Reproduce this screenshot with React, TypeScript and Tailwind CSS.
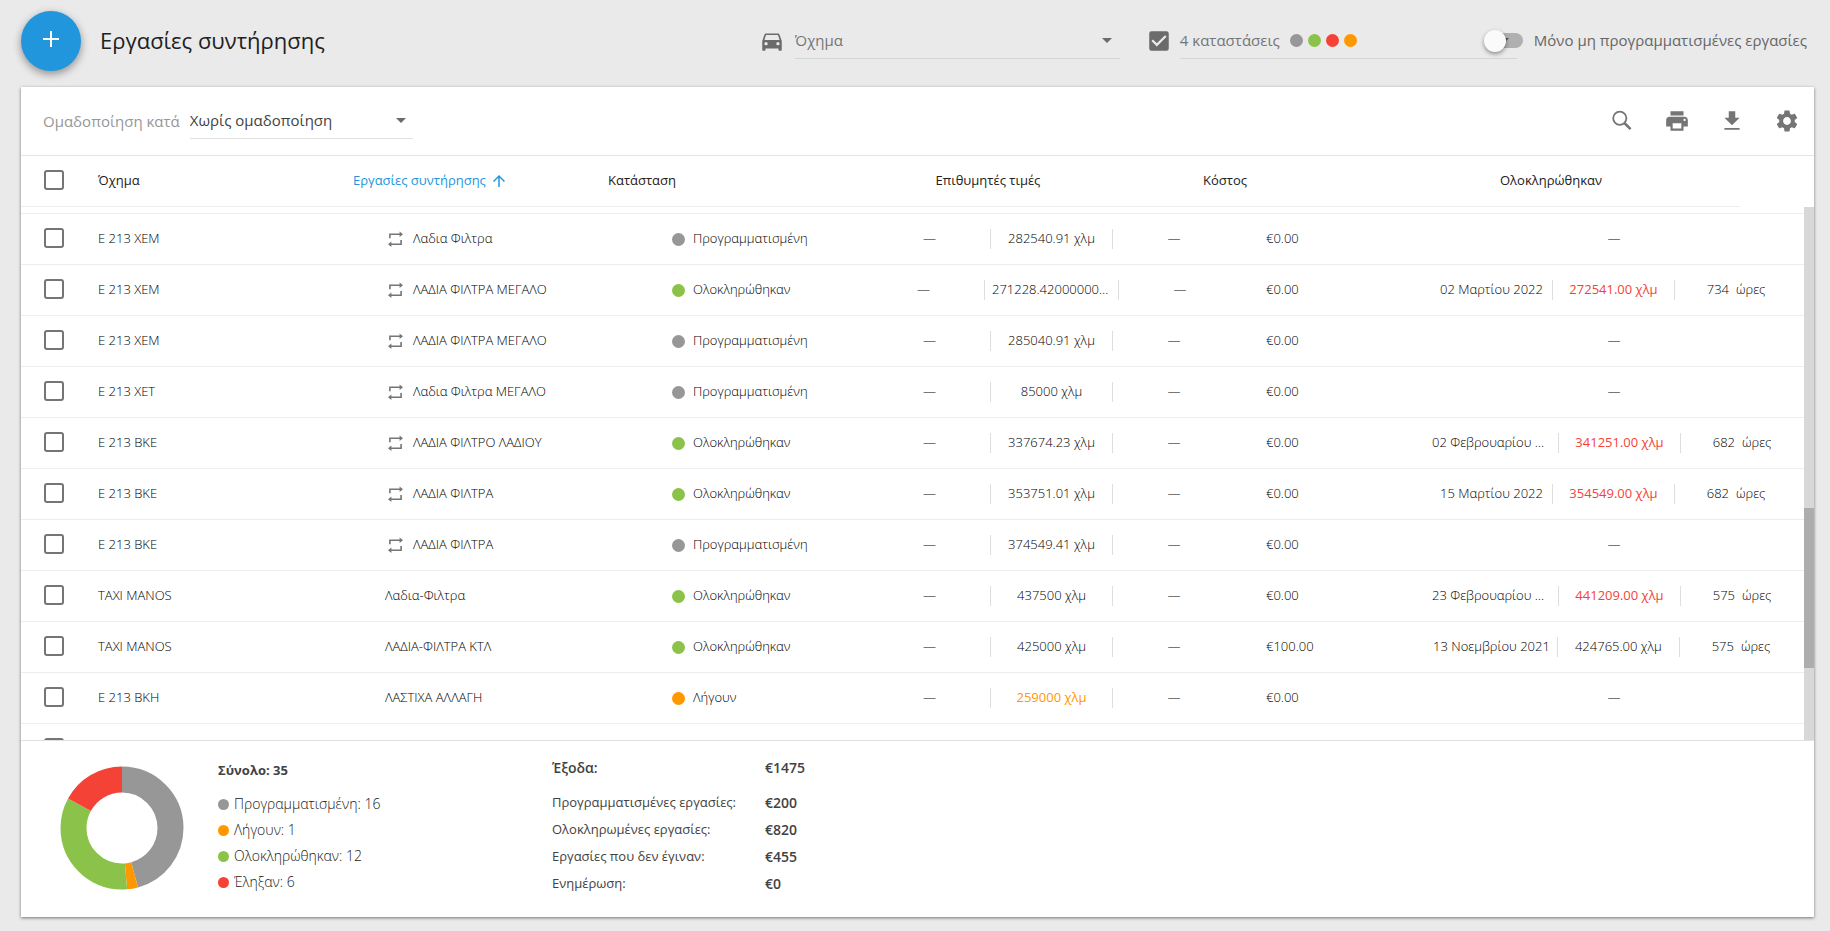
import React from "react";
import { MdArrowUpward, MdCheckBox, MdDirectionsCar, MdPrint, MdSettings } from "react-icons/md";

type Status = "planned" | "done" | "expiring" | "expired";

type Task = {
  vehicle: string;
  name: string;
  repeat: boolean;
  status: Status;
  mileage: string;
  cost: string;
  completed?: { date: string; mileage: string; hours: string; late: boolean };
};

const STATUS: Record<Status, { label: string; dot: string; color: string }> = {
  planned: { label: "Προγραμματισμένη", dot: "bg-[#979797]", color: "#979797" },
  expiring: { label: "Λήγουν", dot: "bg-[#ff9800]", color: "#ff9800" },
  done: { label: "Ολοκληρώθηκαν", dot: "bg-[#8bc34a]", color: "#8bc34a" },
  expired: { label: "Έληξαν", dot: "bg-[#f44336]", color: "#f44336" },
};

const TASKS: Task[] = [
  { vehicle: "Ε 213 ΧΕΜ", name: "Λαδια Φιλτρα", repeat: true, status: "planned", mileage: "282540.91 χλμ", cost: "€0.00" },
  { vehicle: "Ε 213 ΧΕΜ", name: "ΛΑΔΙΑ ΦΙΛΤΡΑ ΜΕΓΑΛΟ", repeat: true, status: "done", mileage: "271228.42000000004 χλμ", cost: "€0.00", completed: { date: "02 Μαρτίου 2022", mileage: "272541.00 χλμ", hours: "734", late: true } },
  { vehicle: "Ε 213 ΧΕΜ", name: "ΛΑΔΙΑ ΦΙΛΤΡΑ ΜΕΓΑΛΟ", repeat: true, status: "planned", mileage: "285040.91 χλμ", cost: "€0.00" },
  { vehicle: "Ε 213 ΧΕΤ", name: "Λαδια Φιλτρα ΜΕΓΑΛΟ", repeat: true, status: "planned", mileage: "85000 χλμ", cost: "€0.00" },
  { vehicle: "Ε 213 ΒΚΕ", name: "ΛΑΔΙΑ ΦΙΛΤΡΟ ΛΑΔΙΟΥ", repeat: true, status: "done", mileage: "337674.23 χλμ", cost: "€0.00", completed: { date: "02 Φεβρουαρίου 2022", mileage: "341251.00 χλμ", hours: "682", late: true } },
  { vehicle: "Ε 213 ΒΚΕ", name: "ΛΑΔΙΑ ΦΙΛΤΡΑ", repeat: true, status: "done", mileage: "353751.01 χλμ", cost: "€0.00", completed: { date: "15 Μαρτίου 2022", mileage: "354549.00 χλμ", hours: "682", late: true } },
  { vehicle: "Ε 213 ΒΚΕ", name: "ΛΑΔΙΑ ΦΙΛΤΡΑ", repeat: true, status: "planned", mileage: "374549.41 χλμ", cost: "€0.00" },
  { vehicle: "TAXI MANOS", name: "Λαδια-Φιλτρα", repeat: false, status: "done", mileage: "437500 χλμ", cost: "€0.00", completed: { date: "23 Φεβρουαρίου 2022", mileage: "441209.00 χλμ", hours: "575", late: true } },
  { vehicle: "TAXI MANOS", name: "ΛΑΔΙΑ-ΦΙΛΤΡΑ ΚΤΛ", repeat: false, status: "done", mileage: "425000 χλμ", cost: "€100.00", completed: { date: "13 Νοεμβρίου 2021", mileage: "424765.00 χλμ", hours: "575", late: false } },
  { vehicle: "Ε 213 ΒΚΗ", name: "ΛΑΣΤΙΧΑ ΑΛΛΑΓΗ", repeat: false, status: "expiring", mileage: "259000 χλμ", cost: "€0.00" },
  { vehicle: "", name: "", repeat: false, status: "planned", mileage: "", cost: "" },
];

const SUMMARY: { status: Status; count: number }[] = [
  { status: "planned", count: 16 },
  { status: "expiring", count: 1 },
  { status: "done", count: 12 },
  { status: "expired", count: 6 },
];

const EXPENSES = [
  { label: "Προγραμματισμένες εργασίες:", value: "€200" },
  { label: "Ολοκληρωμένες εργασίες:", value: "€820" },
  { label: "Εργασίες που δεν έγιναν:", value: "€455" },
  { label: "Ενημέρωση:", value: "€0" },
];

function Caret() {
  return (
    <svg viewBox="0 0 10 5" className="pointer-events-none h-[5px] w-[10px] shrink-0 fill-[#6b6b6b]" aria-hidden="true">
      <path d="M0 0h10L5 5z" />
    </svg>
  );
}

function RepeatIcon() {
  return (
    <svg viewBox="0 0 15 17" className="h-[17px] w-[15px] shrink-0 fill-none stroke-[#757575]" aria-hidden="true">
      <path d="M1.9 7.2V3.2H12M13.1 9v4.2H3" strokeWidth="1.6" />
      <path d="M11.6.4 15 3.2l-3.4 2.8zM3.4 10.4 0 13.2 3.4 16z" className="fill-[#757575]" stroke="none" />
    </svg>
  );
}

function SearchIcon() {
  return (
    <svg viewBox="0 0 26 26" className="size-[26px] fill-none stroke-current" aria-hidden="true">
      <circle cx="10.8" cy="10.3" r="6.6" strokeWidth="1.8" />
      <path d="m15.4 15 6.2 6.2" strokeWidth="2.6" />
    </svg>
  );
}

function DownloadIcon() {
  return (
    <svg viewBox="0 0 24 24" className="size-[26px] fill-current" aria-hidden="true">
      <path d="M19 9h-4V3H9v6H5l7 7 7-7zM5 18.4V20h14v-1.6H5z" />
    </svg>
  );
}

function Tick({ label }: { label: string }) {
  return (
    <input
      type="checkbox"
      aria-label={label}
      className="size-5 appearance-none rounded-[3px] border-2 border-[#757575] bg-white checked:bg-[#757575]"
    />
  );
}

function Dot({ status, className }: { status: Status; className: string }) {
  return <span className={`shrink-0 rounded-full ${STATUS[status].dot} ${className}`} />;
}

function Segment({ children, last = false, className = "" }: { children: React.ReactNode; last?: boolean; className?: string }) {
  return (
    <span
      className={`flex h-5 max-w-[134px] min-w-[122px] shrink-0 items-center justify-center px-[7px] ${last ? "" : "border-r border-[#dedede]"} ${className}`}
    >
      <span className="truncate">{children}</span>
    </span>
  );
}

function Donut() {
  const total = SUMMARY.reduce((sum, s) => sum + s.count, 0);
  const radius = 48.5;
  const length = 2 * Math.PI * radius;
  let start = 0;
  return (
    <svg viewBox="0 0 124 124" className="size-[124px] shrink-0 -rotate-90" role="img" aria-label="Σύνολο: 35">
      {SUMMARY.map(({ status, count }) => {
        const part = (count / total) * length;
        const offset = -start;
        start += part;
        return (
          <circle
            key={status}
            cx="62"
            cy="62"
            r={radius}
            fill="none"
            stroke={STATUS[status].color}
            strokeWidth="26"
            strokeDasharray={`${part} ${length - part}`}
            strokeDashoffset={offset}
          />
        );
      })}
    </svg>
  );
}

function TaskRow({ task }: { task: Task }) {
  const { completed } = task;
  return (
    <tr className="grid h-[51px] shrink-0 grid-cols-[77px_287fr_287fr_190fr_380fr_182fr_380fr] items-center border-t border-[#ededed]">
      <td className="flex pb-0.5 pl-[23px]">
        <Tick label={`Επιλογή ${task.vehicle} ${task.name}`.trim()} />
      </td>
      {task.name && (
        <>
          <td>{task.vehicle}</td>
          <td className="flex items-center gap-2.5">
            {task.repeat && (
              <span className="flex pl-[3px]">
                <RepeatIcon />
              </span>
            )}
            {task.name}
          </td>
          <td className="flex items-center gap-2">
            <Dot status={task.status} className="size-[13px]" />
            {STATUS[task.status].label}
          </td>
          <td className="flex justify-center">
            <Segment>—</Segment>
            <Segment className={task.status === "expiring" ? "font-normal text-[#ff9800]" : ""}>{task.mileage}</Segment>
            <Segment last>—</Segment>
          </td>
          <td className="pl-6">{task.cost}</td>
          <td className="flex justify-center">
            {completed ? (
              <>
                <Segment>{completed.date}</Segment>
                <Segment className={completed.late ? "font-normal text-[#f44336]" : ""}>{completed.mileage}</Segment>
                <Segment last>
                  <span className="mr-[7px]">{completed.hours}</span>
                  ώρες
                </Segment>
              </>
            ) : (
              "—"
            )}
          </td>
        </>
      )}
    </tr>
  );
}

export default function App() {
  return (
    <div className="flex h-screen flex-col bg-[#eaeaea] px-4 pb-[14px] pl-[21px] font-['Open_Sans','Noto_Sans',sans-serif] text-[#212121]">
      <header className="flex h-[87px] shrink-0 items-center pb-1.5">
        <button
          type="button"
          aria-label="Προσθήκη"
          className="flex size-[60px] shrink-0 items-center justify-center rounded-full bg-[#2196dd] pb-1 text-white shadow-[0_3px_8px_rgba(0,0,0,0.4)]"
        >
          <svg viewBox="0 0 16 16" className="size-4 stroke-current stroke-2" aria-hidden="true">
            <path d="M8 0v16M0 8h16" />
          </svg>
        </button>
        <h1 className="ml-[19px] text-[22px] whitespace-nowrap">Εργασίες συντήρησης</h1>

        <div className="ml-auto flex items-center text-[15px] text-[#757575]">
          <MdDirectionsCar className="mr-2.5 size-[26px] text-[#6b6b6b]" aria-hidden="true" />
          <div className="mr-[26px] flex h-9 w-[325px] items-center border-b border-[#d5d5d5] pr-2">
            <select aria-label="Όχημα" className="h-full flex-1 appearance-none bg-transparent outline-none">
              <option>Όχημα</option>
            </select>
            <Caret />
          </div>
          <MdCheckBox className="mr-2 size-[26px] text-[#6b6b6b]" aria-hidden="true" />
          <button type="button" className="flex h-9 w-[337px] items-center border-b border-[#d5d5d5] pr-2">
            <span>4 καταστάσεις</span>
            <span className="ml-2.5 flex gap-[5px]">
              <Dot status="planned" className="size-[13px]" />
              <Dot status="done" className="size-[13px]" />
              <Dot status="expired" className="size-[13px]" />
              <Dot status="expiring" className="size-[13px]" />
            </span>
            <span className="ml-auto">
              <Caret />
            </span>
          </button>
          <label className="relative -ml-[33px] flex items-center pr-[7px] whitespace-nowrap text-[#666666]">
            <input type="checkbox" role="switch" className="peer sr-only" />
            <span className="mr-[11px] flex h-[15px] w-[39px] items-center rounded-full bg-gradient-to-r from-transparent from-20% to-black/25 to-20%">
              <span className="size-[22px] shrink-0 rounded-full bg-[#fafafa] shadow-[0_2px_4px_rgba(0,0,0,0.4)]" />
            </span>
            Μόνο μη προγραμματισμένες εργασίες
          </label>
        </div>
      </header>

      <main className="flex min-h-0 flex-1 flex-col bg-white shadow-[0_1px_3px_rgba(0,0,0,0.5)]">
        <div className="flex h-[69px] shrink-0 items-center border-b border-[#e4e4e4] pr-3.5 pl-[22px] text-[15px]">
          <label htmlFor="grouping" className="text-[#979797]">
            Ομαδοποίηση κατά
          </label>
          <div className="ml-2.5 flex h-9 w-[223px] items-center border-b border-[#e0e0e0] pr-[7px]">
            <select id="grouping" className="h-full flex-1 appearance-none bg-transparent text-[#424242] outline-none">
              <option>Χωρίς ομαδοποίηση</option>
            </select>
            <Caret />
          </div>
          <div className="ml-auto flex gap-[29px] text-[#757575]">
            <button type="button" aria-label="Αναζήτηση">
              <SearchIcon />
            </button>
            <button type="button" aria-label="Εκτύπωση">
              <MdPrint className="size-[26px]" />
            </button>
            <button type="button" aria-label="Λήψη">
              <DownloadIcon />
            </button>
            <button type="button" aria-label="Ρυθμίσεις">
              <MdSettings className="size-[26px]" />
            </button>
          </div>
        </div>

        <div className="flex min-h-0 flex-1">
          <table className="flex min-w-0 flex-1 flex-col text-[13px] whitespace-nowrap">
            <thead className="block shrink-0 pr-16">
              <tr className="grid h-[51px] grid-cols-[77px_255fr_255fr_177fr_406fr_171fr_378fr] items-center border-b border-[#ededed] text-left">
                <th className="flex pb-0.5 pl-[23px]">
                  <Tick label="Επιλογή όλων" />
                </th>
                <th className="font-medium">Όχημα</th>
                <th className="font-medium text-[#2196dd]">
                  <button type="button" className="flex items-center gap-1">
                    Εργασίες συντήρησης
                    <MdArrowUpward className="size-[18px]" />
                  </button>
                </th>
                <th className="font-medium">Κατάσταση</th>
                <th className="text-center font-medium">Επιθυμητές τιμές</th>
                <th className="pl-3 font-medium">Κόστος</th>
                <th className="text-center font-medium">Ολοκληρώθηκαν</th>
              </tr>
            </thead>
            <tbody className="flex min-h-0 flex-1 flex-col overflow-hidden pt-1.5 font-light text-black">
              {TASKS.map((task, i) => (
                <TaskRow key={i} task={task} />
              ))}
            </tbody>
          </table>
          <div className="mt-[51px] flex w-2.5 shrink-0 flex-col bg-[#d8d8d8]" aria-hidden="true">
            <div className="grow-[301]" />
            <div className="grow-[160] bg-[#adadad]" />
            <div className="grow-[72]" />
          </div>
        </div>

        <footer className="flex h-[177px] shrink-0 items-start border-t border-[#e0e0e0] pt-[18px] pl-[39px]">
          <div className="pt-[7px]">
            <Donut />
          </div>
          <section className="ml-[34px] w-[334px] text-sm font-light text-[#212121]">
            <h2 className="pb-2.5 text-[13px] leading-[22px] font-bold text-[#424242]">Σύνολο: 35</h2>
            <ul>
              {SUMMARY.map(({ status, count }) => (
                <li key={status} className="flex h-[26px] items-center gap-[5px]">
                  <Dot status={status} className="size-[11px]" />
                  {STATUS[status].label}: {count}
                </li>
              ))}
            </ul>
          </section>
          <dl className="grid grid-cols-[auto_auto] gap-x-[29px] text-[13px] leading-[27px] text-[#424242]">
            <dt className="pb-3 text-sm leading-[18px] font-semibold">Έξοδα:</dt>
            <dd className="pb-3 text-sm leading-[18px] font-semibold">€1475</dd>
            {EXPENSES.map(({ label, value }) => (
              <React.Fragment key={label}>
                <dt>{label}</dt>
                <dd className="text-sm leading-[27px] font-semibold">{value}</dd>
              </React.Fragment>
            ))}
          </dl>
        </footer>
      </main>
    </div>
  );
}
